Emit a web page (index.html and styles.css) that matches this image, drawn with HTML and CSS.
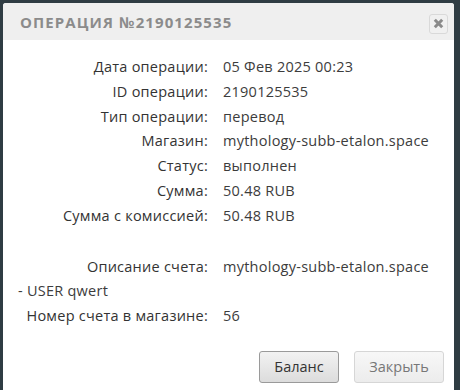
FILE: index.html
```html
<!DOCTYPE html>
<html>
<head>
<meta charset="utf-8">
<link rel="stylesheet" href="styles.css">
</head>
<body>
<div class="dialog">
  <div class="header">
    <span class="title">Операция №2190125535</span>
    <button class="close" aria-label="close"><svg width="11" height="11" viewBox="0 0 11 11"><path d="M1.8 1.8L9.2 9.2M9.2 1.8L1.8 9.2" stroke="#8a8a8a" stroke-width="3" stroke-linecap="butt"/></svg></button>
  </div>
  <div class="body">
    <div class="rows">
      <div class="row"><span class="label">Дата операции:</span><span class="value">05 Фев 2025 00:23</span></div>
      <div class="row"><span class="label">ID операции:</span><span class="value">2190125535</span></div>
      <div class="row"><span class="label">Тип операции:</span><span class="value">перевод</span></div>
      <div class="row"><span class="label">Магазин:</span><span class="value">mythology-subb-etalon.space</span></div>
      <div class="row"><span class="label">Статус:</span><span class="value">выполнен</span></div>
      <div class="row"><span class="label">Сумма:</span><span class="value">50.48 RUB</span></div>
      <div class="row"><span class="label">Сумма с комиссией:</span><span class="value">50.48 RUB</span></div>
      <div class="row empty"></div>
      <div class="row"><span class="label">Описание счета:</span><span class="value">mythology-subb-etalon.space</span></div>
    </div>
    <div class="extra">- USER qwert</div>
    <div class="rows">
      <div class="row"><span class="label">Номер счета в магазине:</span><span class="value">56</span></div>
    </div>
  </div>
  <div class="footer">
    <button class="btn primary">Баланс</button>
    <button class="btn secondary">Закрыть</button>
  </div>
</div>
</body>
</html>
```
FILE: styles.css
```css
html, body {
  margin: 0;
  padding: 0;
}
body {
  background: #2f3c43;
  width: 460px;
  height: 390px;
  overflow: hidden;
  font-family: "Open Sans", "Noto Sans", sans-serif;
}
.dialog {
  margin: 3px 0 0 3px;
  width: 451px;
  height: 400px;
  background: #ffffff;
  border-radius: 3px 3px 0 0;
  display: flex;
  flex-direction: column;
}
.header {
  height: 37px;
  background: #efefef;
  display: flex;
  align-items: center;
  justify-content: space-between;
  padding: 0 6px 0 17px;
  border-radius: 3px 3px 0 0;
}
.title {
  text-transform: uppercase;
  color: #8b8b8b;
  font-weight: 700;
  font-size: 15px;
  letter-spacing: 1.1px;
  padding-top: 1px;
}
.close {
  width: 19px;
  height: 20px;
  padding: 0;
  border: 1px solid #d9d9d9;
  border-radius: 3px;
  background: #f0f0f0;
  display: flex;
  align-items: center;
  justify-content: center;
  margin-top: 4px;
}
.body {
  padding: 17px 0 0 0;
  color: #333;
  font-size: 14.5px;
  letter-spacing: 0.25px;
}
.rows {
  display: flex;
  flex-direction: column;
}
.row {
  display: grid;
  grid-template-columns: 205px 1fr;
  column-gap: 15px;
  height: 24.8px;
  align-items: start;
}
.row.empty {
  height: 26px;
}
.label {
  text-align: right;
  color: #333;
}
.value {
  color: #3c3c3c;
}
.extra {
  padding-left: 15px;
  height: 24.8px;
  color: #3c3c3c;
}
.footer {
  display: flex;
  justify-content: flex-end;
  gap: 15px;
  padding: 20px 10px 0 0;
}
.btn {
  font-family: "Open Sans", "Noto Sans", sans-serif;
  font-size: 14.5px;
  height: 32px;
  border-radius: 3px;
  padding: 0;
}
.btn.primary {
  width: 80px;
  color: #333;
  border: 1px solid #9a9a9a;
  background: linear-gradient(#f2f2f2, #dcdcdc);
}
.btn.secondary {
  width: 90px;
  color: #777;
  border: 1px solid #d6d6d6;
  background: linear-gradient(#f7f7f7, #ececec);
}
```
